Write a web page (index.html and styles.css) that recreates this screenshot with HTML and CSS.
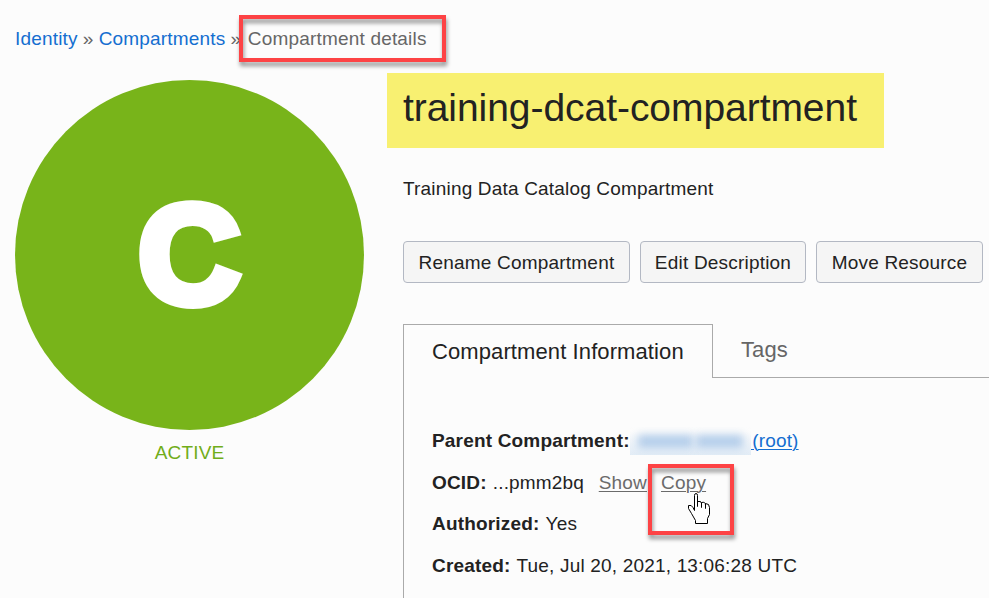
FILE: index.html
```html
<!DOCTYPE html>
<html lang="en">
<head>
<meta charset="utf-8">
<title>Compartment details</title>
<link rel="stylesheet" href="styles.css">
</head>
<body>
<nav class="breadcrumb"><a class="w-identity" href="#">Identity</a><span class="sep">»</span><a class="w-comps" href="#">Compartments</a><span class="sep">»</span><span class="current">Compartment details<i class="callout callout-crumb"></i></span></nav>
<main class="page">
  <aside class="status">
    <div class="badge"><span class="letter">C</span></div>
    <div class="state">ACTIVE</div>
  </aside>
  <section class="details">
    <h1><span>training-dcat-compartment</span></h1>
    <p class="description"><span>Training Data Catalog Compartment</span></p>
    <div class="actions">
      <button class="rename">Rename Compartment</button>
      <button class="edit">Edit Description</button>
      <button class="move">Move Resource</button>
    </div>
    <div class="tabs">
      <div class="tab active"><span>Compartment Information</span></div>
      <div class="tab"><span>Tags</span></div>
    </div>
    <div class="panel">
      <div class="row"><b>Parent Compartment:</b><span class="redacted"><i class="smudge one"></i><i class="smudge two"></i></span><a class="root" href="#">&nbsp;(root)</a></div>
      <div class="row"><b>OCID:</b><span class="ocid">...pmm2bq</span><a class="show" href="#">Show</a><a class="copy" href="#">Copy<i class="callout callout-copy"></i>
        <svg class="cursor" width="23" height="33" viewBox="0 0 23 33"><path d="M6.500 18.500V3.500Q6.500 1.500 8 1.500Q9.500 1.500 9.500 3.500V14.500V9.500Q13.500 8.500 13.500 11.500V15.500V10.500Q17.500 9.500 17.500 13V16.500V11.500Q21.500 11.500 21.500 15.500V22.500L19.500 26.500V31.500H7.500V28.500L3.500 21.500L0.500 16.500V13.500Q3.500 12.500 5 15.500L6.500 18.500" fill="#fff" stroke="#000"/></svg></a></div>
      <div class="row"><b>Authorized:</b><span class="value">Yes</span></div>
      <div class="row"><b>Created:</b><span class="value">Tue, Jul 20, 2021, 13:06:28 UTC</span></div>
    </div>
  </section>
</main>
</body>
</html>
```
FILE: styles.css
```css
* { box-sizing: border-box; }
body {
  margin: 0;
  height: 598px;
  overflow: hidden;
  background: #fcfcfc;
  color: #222;
  font: 19px/24px "Liberation Sans", Arial, sans-serif;
  letter-spacing: .18px;
  white-space: nowrap;
}
a { color: #146ed0; text-decoration: none; }
.breadcrumb { display: flex; height: 73px; padding: 27px 0 0 15px; color: #666; }
.sep { width: 21px; text-align: center; }
.current { position: relative; margin-left: 1.4px; }
.callout {
  position: absolute;
  border: 4px solid #fd4345;
  filter: drop-shadow(1px 4px 2px rgba(0, 0, 0, .42));
}
.callout-crumb { left: -9px; top: -12px; width: 207px; height: 47px; }
.page { display: flex; }
.status { width: 387px; padding: 7px 0 0 15px; }
.badge {
  display: flex;
  align-items: center;
  justify-content: center;
  width: 349px;
  height: 350px;
  border-radius: 50%;
  background: #78b41a;
}
.letter {
  color: #fff;
  font-size: 134px;
  font-weight: bold;
  line-height: 200px;
  letter-spacing: 0;
  -webkit-text-stroke: 9.5px #fff;
  transform: scale(1.05, 1.045);
}
.state { width: 349px; margin-top: 11px; text-align: center; color: #71ad19; }
.details { width: 602px; }
h1 {
  width: 497px;
  height: 75px;
  margin: 0;
  padding: 10px 0 0 16px;
  background: #f8f071;
  font-size: 39px;
  font-weight: normal;
  line-height: 50px;
  letter-spacing: -.05px;
}
.description { margin: 29px 0 40px 16px; }
.actions { display: flex; gap: 10px; margin-left: 16px; }
button {
  height: 42px;
  padding: 1px 0 0;
  border: 1px solid #b3b8c3;
  border-radius: 4px;
  background: #f5f5f5;
  color: #222;
  font: inherit;
  letter-spacing: .2px;
}
.rename { width: 227px; }
.edit { width: 166px; }
.move { width: 167px; }
.tabs { display: flex; height: 54px; margin: 41px 0 0 16px; font-size: 22px; letter-spacing: .1px; }
.tab { flex: 1; padding: 14px 0 0 28px; border-bottom: 1px solid #aaa; color: #666; }
.active { flex: none; width: 310px; padding-top: 15px; border: 1px solid #aaa; border-bottom: 0; color: #222; }
.panel { height: 220px; margin-left: 16px; padding: 42px 0 0 28px; border-left: 1px solid #aaa; }
.row { display: flex; height: 41.6px; align-items: center; }
.row:nth-child(2) { padding-top: 1px; }
.value { margin-left: 6px; }
.ocid { width: 101px; margin-left: 6px; }
.redacted { position: relative; overflow: hidden; width: 121px; height: 28px; margin-left: 0; background: linear-gradient(#fcfcfc 15%, #e2ecf6); }
.smudge { position: absolute; top: 8px; height: 13px; background: #b3cdea; filter: blur(4.5px); }
.one { left: 8px; width: 55px; }
.two { left: 66px; width: 47px; }
.root, .show, .copy { text-decoration: underline; text-decoration-thickness: 1px; text-underline-offset: 2px; }
.root { margin-left: -4px; }
.show, .copy { color: #6b6b6b; }
.show { margin-left: 5px; }
.copy { position: relative; margin-left: 14px; }
.callout-copy { left: -13px; top: -7px; width: 86px; height: 71px; }
.cursor { position: absolute; left: 27px; top: 21px; }
```
